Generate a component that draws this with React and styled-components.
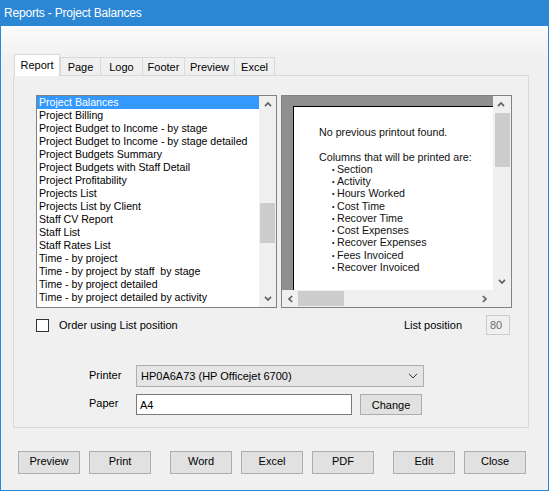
import React from 'react';
import styled, { createGlobalStyle, css } from 'styled-components';

const GlobalStyle = createGlobalStyle`
  html, body {
    margin: 0;
    padding: 0;
    background: #f0f0f0;
  }
  body {
    font-family: 'Liberation Sans', Arial, sans-serif;
    font-size: 11px;
    color: #000;
  }
  * {
    box-sizing: border-box;
  }
`;

const Window = styled.div`
  width: 549px;
  height: 491px;
  display: flex;
  flex-direction: column;
  border: 1px solid #2b87d4;
  border-top: none;
  background: #f0f0f0;
`;

const TitleBar = styled.div`
  flex: none;
  height: 26px;
  display: flex;
  align-items: center;
  padding-left: 3px;
  background: #2b87d4;
  color: #fff;
  font-size: 12px;
  letter-spacing: -0.2px;
`;

const Body = styled.div`
  flex: 1;
  padding: 28px 19px 0 12px;
  background: linear-gradient(#fbfbfb, #f0f0f0 34px);
`;

const TabStrip = styled.div`
  display: flex;
  align-items: flex-end;
  height: 21px;
  padding-left: 1px;
  position: relative;
  z-index: 1;
`;

const Tab = styled.div`
  width: ${({ $width }) => $width}px;
  height: 18px;
  display: flex;
  align-items: center;
  justify-content: center;
  padding-top: 1px;
  background: #f0f0f0;
  border: 1px solid #d9d9d9;
  border-bottom: none;
  margin-left: -1px;

  ${({ $active }) =>
    $active &&
    css`
      height: 22px;
      margin-left: 0;
      margin-bottom: -1px;
      padding-top: 0;
      padding-bottom: 2px;
      background: #fff;
      margin-right: 1px;
    `}
`;

const Panel = styled.div`
  height: 353px;
  border: 1px solid #d9d9d9;
  background: #f0f0f0;
  padding: 19px 16px 0 22px;
`;

const BoxesRow = styled.div`
  display: flex;
  gap: 4px;
  height: 213px;
`;

const ListBox = styled.div`
  width: 241px;
  display: flex;
  border: 1px solid #828282;
  background: #fff;
`;

const Items = styled.div`
  flex: 1;
  overflow: hidden;
`;

const Item = styled.div`
  height: 13px;
  line-height: 13px;
  padding-left: 2px;
  white-space: pre;
  font-size: 10.6px;

  ${({ $selected }) =>
    $selected &&
    css`
      background: #3399ff;
      color: #fff;
    `}
`;

const VScroll = styled.div`
  width: ${({ $width }) => $width}px;
  flex: none;
  display: flex;
  flex-direction: column;
  background: #f0f0f0;
`;

const HScroll = styled.div`
  display: flex;
  background: #f0f0f0;
`;

const ArrowButton = styled.div`
  flex: none;
  width: ${({ $size }) => ($size ? `${$size}px` : '100%')};
  height: ${({ $vertical, $size }) => ($vertical ? `${$size || 17}px` : '100%')};
  display: flex;
  align-items: center;
  justify-content: center;
  color: #606060;
`;

const Track = styled.div`
  flex: 1;
  display: flex;
  flex-direction: ${({ $vertical }) => ($vertical ? 'column' : 'row')};
  align-items: center;
`;

const Thumb = styled.div`
  flex: none;
  background: #cdcdcd;
  ${({ $vertical, $offset, $length }) =>
    $vertical
      ? css`
          width: 15px;
          height: ${$length}px;
          margin-top: ${$offset}px;
        `
      : css`
          height: 15px;
          width: ${$length}px;
          margin-left: ${$offset}px;
        `}
`;

const PreviewBox = styled.div`
  width: 231px;
  border: 1px solid #828282;
  display: grid;
  grid-template-columns: 1fr 18px;
  grid-template-rows: 1fr 17px;
  background: #f0f0f0;
`;

const PreviewArea = styled.div`
  background: #8f8f8f;
  overflow: hidden;
  padding: 10px 0 0 11px;
`;

const Page = styled.div`
  height: 220px;
  background: #fff;
  border-top: 1px solid #000;
  border-left: 1px solid #000;
  padding: 19px 0 0 25px;
  font-size: 10.7px;
  line-height: 12.25px;
  white-space: nowrap;
  color: #111;
`;

const PageLine = styled.div`
  margin-bottom: ${({ $gap }) => ($gap ? '12.25px' : 0)};
`;

const Bullets = styled.ul`
  list-style: none;
  margin: 0;
  padding: 0 0 0 13px;
`;

const Bullet = styled.li`
  height: 12.25px;

  &::before {
    content: '\\2022';
    font-size: 7px;
    line-height: 0;
    vertical-align: 1px;
    margin-right: 2.5px;
  }
`;

const Corner = styled.div`
  background: #f0f0f0;
`;

const OptionRow = styled.div`
  margin-top: 7px;
  margin-right: 2px;
  height: 20px;
  display: flex;
  align-items: center;
  justify-content: space-between;
`;

const CheckLabel = styled.label`
  display: flex;
  align-items: center;
  gap: 10px;
`;

const CheckBox = styled.span`
  width: 13px;
  height: 13px;
  border: 1px solid #333;
  background: #fff;
`;

const PositionGroup = styled.div`
  display: flex;
  align-items: center;
  gap: 24px;
`;

const NumberBox = styled.div`
  width: 24px;
  height: 20px;
  border: 1px solid #cccccc;
  background: #f0f0f0;
  color: #6d6d6d;
  padding: 3px 0 0 3px;
`;

const PrinterGrid = styled.div`
  margin-top: 30px;
  padding-left: 53px;
  display: grid;
  grid-template-columns: 47px auto;
  grid-template-rows: 22px 21px;
  row-gap: 7px;
  align-items: center;
`;

const FieldLabel = styled.span`
  margin-bottom: 3px;
`;

const Combo = styled.div`
  width: 288px;
  height: 22px;
  display: flex;
  align-items: center;
  justify-content: space-between;
  padding: 0 5px 0 4px;
  background: #e5e5e5;
  border: 1px solid #adadad;
  color: #000;
`;

const FieldRow = styled.div`
  display: flex;
  align-items: center;
  gap: 8px;
`;

const TextBox = styled.div`
  width: 216px;
  height: 21px;
  display: flex;
  align-items: center;
  padding-left: 3px;
  background: #fff;
  border: 1px solid #7a7a7a;
`;

const Button = styled.button`
  width: 62px;
  height: ${({ $small }) => ($small ? 21 : 23)}px;
  padding: 0 0 ${({ $small }) => ($small ? 0 : 3)}px;
  background: #e1e1e1;
  border: 1px solid #adadad;
  font-family: 'Liberation Sans', Arial, sans-serif;
  font-size: 11px;
  color: #000;
`;

const ButtonBar = styled.div`
  margin-top: 23px;
  padding-left: 5px;
  display: flex;
  gap: 19px;
`;

const ButtonGroup = styled.div`
  display: flex;
  gap: 9px;
`;

const Chevron = ({ dir, color = '#606060', w = 8, h = 5, stroke = 1.7 }) => {
  const vertical = dir === 'up' || dir === 'down';
  const vw = vertical ? w : h;
  const vh = vertical ? h : w;
  const points = {
    up: `1,${h - 0.8} ${w / 2},1 ${w - 1},${h - 0.8}`,
    down: `1,0.8 ${w / 2},${h - 1} ${w - 1},0.8`,
    left: `${h - 0.8},1 1,${w / 2} ${h - 0.8},${w - 1}`,
    right: `0.8,1 ${h - 1},${w / 2} 0.8,${w - 1}`,
  }[dir];
  return (
    <svg width={vw} height={vh} viewBox={`0 0 ${vw} ${vh}`}>
      <polyline points={points} fill="none" stroke={color} strokeWidth={stroke} />
    </svg>
  );
};

const TABS = [
  { label: 'Report', width: 46 },
  { label: 'Page', width: 41 },
  { label: 'Logo', width: 43 },
  { label: 'Footer', width: 43 },
  { label: 'Preview', width: 51 },
  { label: 'Excel', width: 41 },
];

const REPORTS = [
  'Project Balances',
  'Project Billing',
  'Project Budget to Income - by stage',
  'Project Budget to Income - by stage detailed',
  'Project Budgets Summary',
  'Project Budgets with Staff Detail',
  'Project Profitability',
  'Projects List',
  'Projects List by Client',
  'Staff CV Report',
  'Staff List',
  'Staff Rates List',
  'Time - by project',
  'Time - by project by staff  by stage',
  'Time - by project detailed',
  'Time - by project detailed by activity',
];

const COLUMNS = [
  'Section',
  'Activity',
  'Hours Worked',
  'Cost Time',
  'Recover Time',
  'Cost Expenses',
  'Recover Expenses',
  'Fees Invoiced',
  'Recover Invoiced',
];

const App = () => (
  <>
    <GlobalStyle />
    <Window>
      <TitleBar>Reports - Project Balances</TitleBar>
      <Body>
        <TabStrip>
          {TABS.map(({ label, width }, i) => (
            <Tab key={label} $width={width} $active={i === 0}>
              {label}
            </Tab>
          ))}
        </TabStrip>
        <Panel>
          <BoxesRow>
            <ListBox>
              <Items>
                {REPORTS.map((name, i) => (
                  <Item key={name} $selected={i === 0}>
                    {name}
                  </Item>
                ))}
              </Items>
              <VScroll $width={17}>
                <ArrowButton $vertical>
                  <Chevron dir="up" />
                </ArrowButton>
                <Track $vertical>
                  <Thumb $vertical $offset={90} $length={40} />
                </Track>
                <ArrowButton $vertical>
                  <Chevron dir="down" />
                </ArrowButton>
              </VScroll>
            </ListBox>
            <PreviewBox>
              <PreviewArea>
                <Page>
                  <PageLine $gap>No previous printout found.</PageLine>
                  <PageLine>Columns that will be printed are:</PageLine>
                  <Bullets>
                    {COLUMNS.map(col => (
                      <Bullet key={col}>{col}</Bullet>
                    ))}
                  </Bullets>
                </Page>
              </PreviewArea>
              <VScroll $width={18}>
                <ArrowButton $vertical $size={16}>
                  <Chevron dir="up" />
                </ArrowButton>
                <Track $vertical>
                  <Thumb $vertical $offset={1} $length={54} />
                </Track>
                <ArrowButton $vertical>
                  <Chevron dir="down" />
                </ArrowButton>
              </VScroll>
              <HScroll>
                <ArrowButton $size={16}>
                  <Chevron dir="left" />
                </ArrowButton>
                <Track>
                  <Thumb $offset={0} $length={46} />
                </Track>
                <ArrowButton $size={18}>
                  <Chevron dir="right" />
                </ArrowButton>
              </HScroll>
              <Corner />
            </PreviewBox>
          </BoxesRow>
          <OptionRow>
            <CheckLabel>
              <CheckBox />
              Order using List position
            </CheckLabel>
            <PositionGroup>
              List position
              <NumberBox>80</NumberBox>
            </PositionGroup>
          </OptionRow>
          <PrinterGrid>
            <FieldLabel>Printer</FieldLabel>
            <Combo>
              HP0A6A73 (HP Officejet 6700)
              <Chevron dir="down" color="#333" w={10} h={6} stroke={1} />
            </Combo>
            <FieldLabel>Paper</FieldLabel>
            <FieldRow>
              <TextBox>A4</TextBox>
              <Button $small>Change</Button>
            </FieldRow>
          </PrinterGrid>
        </Panel>
        <ButtonBar>
          <ButtonGroup>
            <Button>Preview</Button>
            <Button>Print</Button>
          </ButtonGroup>
          <ButtonGroup>
            <Button>Word</Button>
            <Button>Excel</Button>
            <Button>PDF</Button>
          </ButtonGroup>
          <ButtonGroup>
            <Button>Edit</Button>
            <Button>Close</Button>
          </ButtonGroup>
        </ButtonBar>
      </Body>
    </Window>
  </>
);

export default App;
